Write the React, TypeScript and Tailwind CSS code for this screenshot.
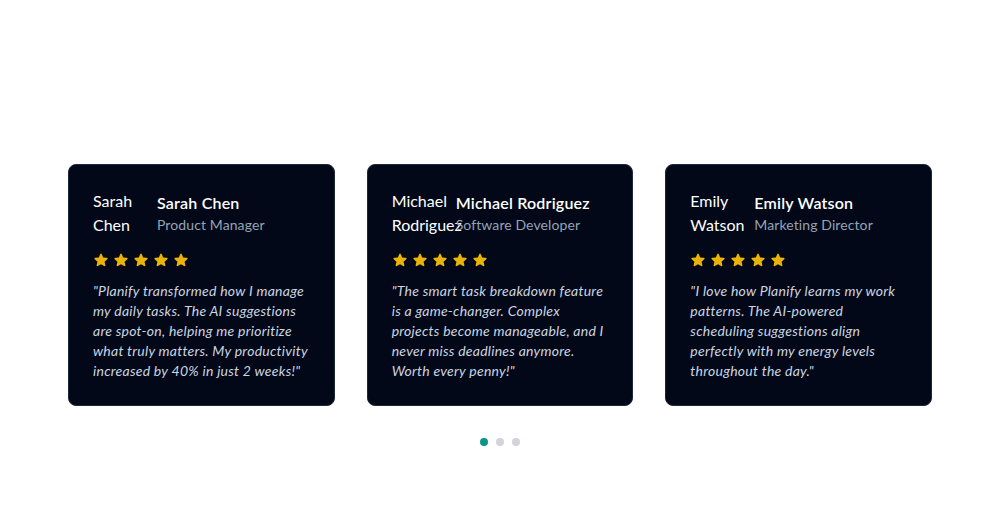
const testimonials = [
  {
    name: "Sarah Chen",
    role: "Product Manager",
    quote:
      "\"Planify transformed how I manage my daily tasks. The AI suggestions are spot-on, helping me prioritize what truly matters. My productivity increased by 40% in just 2 weeks!\"",
  },
  {
    name: "Michael Rodriguez",
    role: "Software Developer",
    quote:
      "\"The smart task breakdown feature is a game-changer. Complex projects become manageable, and I never miss deadlines anymore. Worth every penny!\"",
  },
  {
    name: "Emily Watson",
    role: "Marketing Director",
    quote:
      "\"I love how Planify learns my work patterns. The AI-powered scheduling suggestions align perfectly with my energy levels throughout the day.\"",
  },
];

function Star() {
  return (
    <svg viewBox="0 0 24 24" className="w-4 h-4 fill-[#eab308]">
      <path
        fillRule="evenodd"
        clipRule="evenodd"
        d="M10.788 3.21c.448-1.077 1.976-1.077 2.424 0l2.082 5.006 5.404.434c1.164.093 1.636 1.545.749 2.305l-4.117 3.527 1.257 5.273c.271 1.136-.964 2.033-1.96 1.425L12 18.354 7.373 21.18c-.996.608-2.231-.29-1.96-1.425l1.257-5.273-4.117-3.527c-.887-.76-.415-2.212.749-2.305l5.404-.434 2.082-5.005Z"
      />
    </svg>
  );
}

export default function App() {
  return (
    <div className="min-h-[525px] bg-white font-['Lato','Open_Sans',sans-serif]">
      <section className="px-[68px] pt-[164px]">
        <div className="grid grid-cols-3 gap-8">
          {testimonials.map((t) => (
            <div
              key={t.name}
              className="rounded-lg border border-[#1e293b] bg-[#020817] p-6"
            >
              <div className="flex items-center mb-[15px]">
                <div className="w-12 h-12 shrink-0 mr-4 text-base leading-6 text-white">
                  {t.name}
                </div>
                <div>
                  <h3 className="text-base leading-6 font-semibold tracking-[0.2px] text-white">{t.name}</h3>
                  <p className="text-sm leading-5 tracking-[0.1px] text-[#94a3b8]">{t.role}</p>
                </div>
              </div>
              <div className="flex gap-1 mb-[13px]">
                {[0, 1, 2, 3, 4].map((i) => (
                  <Star key={i} />
                ))}
              </div>
              <p className="text-sm leading-5 italic tracking-[0.25px] text-[#cbd5e1]">{t.quote}</p>
            </div>
          ))}
        </div>
        <div className="flex justify-center gap-2 mt-8">
          <span className="w-2 h-2 rounded-full bg-[#0d9488]" />
          <span className="w-2 h-2 rounded-full bg-[#d1d5db]" />
          <span className="w-2 h-2 rounded-full bg-[#d1d5db]" />
        </div>
      </section>
    </div>
  );
}
